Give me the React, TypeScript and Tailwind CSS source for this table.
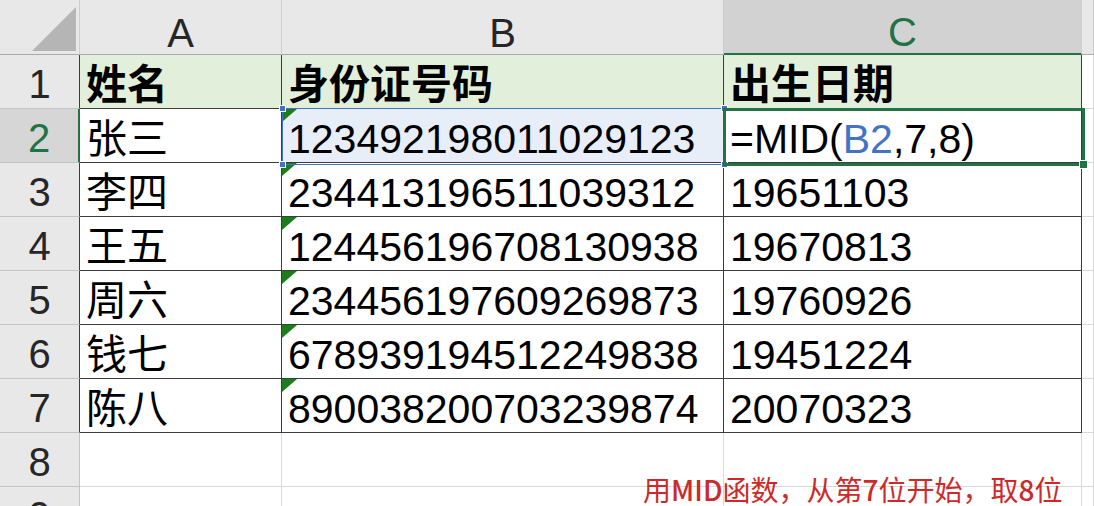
import React from "react";

type Person = { name: string; id: string; birth: React.ReactNode };

const people: Person[] = [
  {
    name: "张三",
    id: "123492198011029123",
    birth: (
      <>
        =MID(<span className="text-[#4472c4]">B2</span>,7,8)
      </>
    ),
  },
  { name: "李四", id: "234413196511039312", birth: "19651103" },
  { name: "王五", id: "124456196708130938", birth: "19670813" },
  { name: "周六", id: "234456197609269873", birth: "19760926" },
  { name: "钱七", id: "678939194512249838", birth: "19451224" },
  { name: "陈八", id: "890038200703239874", birth: "20070323" },
];

const colHead =
  "flex items-end justify-center pb-[1px] bg-[#e8e8e8] border-r border-b border-r-[#cdcdcd] border-b-[#ababab] text-[40px] leading-[40px] text-[#262626]";
const colHeadActive =
  "flex items-end justify-center pb-[1px] bg-[#d2d2d2] border-r border-b-2 border-r-[#cdcdcd] border-b-[#217346] text-[40px] leading-[40px] text-[#217346]";
const rowHead =
  "flex items-end justify-center pb-[4px] bg-[#e8e8e8] border-r border-b border-r-[#3c3c3c] border-b-[#c4c4c4] text-[40px] leading-[40px] text-[#262626]";
const rowHeadActive =
  "flex items-end justify-center pb-[4px] bg-[#d6d6d6] border-r-2 border-b border-r-[#217346] border-b-[#c4c4c4] text-[40px] leading-[40px] text-[#217346]";
const rowHeadPlain =
  "flex items-end justify-center pb-[4px] bg-[#e8e8e8] border-r border-b border-r-[#c4c4c4] border-b-[#c4c4c4] text-[40px] leading-[40px] text-[#262626]";
const cell =
  "relative flex items-end pb-[2px] pl-[6px] border-r border-b border-[#3c3c3c] text-[41px] leading-[41px] text-black whitespace-nowrap";
const blank = "border-r border-b border-[#d9d9d9] bg-white";

// 文本格式数字的绿色小三角
const TextFlag = () => (
  <svg className="absolute left-0 top-0" width="15" height="13" viewBox="0 0 15 13">
    <polygon points="0,0 15,0 0,13" fill="#1d7d1d" />
  </svg>
);

const Handle = ({ className }: { className: string }) => (
  <span className={`absolute h-[7px] w-[7px] border border-white bg-[#4472c4] ${className}`} />
);

export default function App() {
  return (
    <div className="relative h-[506px] w-[1094px] overflow-hidden bg-white font-['Liberation_Sans','Noto_Sans_CJK_SC',sans-serif]">
      <div className="grid grid-cols-[80px_202px_442px_358px_1fr] grid-rows-[55px_repeat(9,54px)]">
        <div className="flex items-end justify-end bg-[#e8e8e8] border-r border-b border-r-[#cdcdcd] border-b-[#ababab] pb-[3px] pr-[3px]">
          <svg width="44" height="44" viewBox="0 0 44 44">
            <polygon points="44,0 44,44 0,44" fill="#b5b5b5" />
          </svg>
        </div>
        <div className={colHead}>A</div>
        <div className={colHead}>B</div>
        <div className={colHeadActive}>C</div>
        <div className={colHead} />

        <div className={rowHead}>1</div>
        <div className={`${cell} bg-[#e2efda] font-bold`}>姓名</div>
        <div className={`${cell} bg-[#e2efda] font-bold`}>身份证号码</div>
        <div className={`${cell} bg-[#e2efda] font-bold`}>出生日期</div>
        <div className={blank} />

        {people.map((p, i) => (
          <React.Fragment key={p.id}>
            <div className={i === 0 ? rowHeadActive : rowHead}>{i + 2}</div>
            <div className={cell}>{p.name}</div>
            <div className={i === 0 ? `${cell} bg-[#e8eef8]` : cell}>
              <TextFlag />
              {p.id}
            </div>
            <div className={cell}>{p.birth}</div>
            <div className={blank} />
          </React.Fragment>
        ))}

        {[8, 9].map((n) => (
          <React.Fragment key={n}>
            <div className={rowHeadPlain}>{n}</div>
            <div className={blank} />
            <div className={blank} />
            <div className={blank} />
            <div className={blank} />
          </React.Fragment>
        ))}
      </div>

      {/* B2 引用框 */}
      <div className="absolute left-[282px] top-[108px] h-[57px] w-[443px] border border-[#4472c4]">
        <Handle className="-left-[4px] -top-[4px]" />
        <Handle className="-right-[4px] -top-[4px]" />
        <Handle className="-bottom-[4px] -left-[4px]" />
        <Handle className="-bottom-[4px] -right-[4px]" />
      </div>

      {/* 活动单元格 C2 */}
      <div className="absolute left-[723px] top-[108px] h-[58px] w-[362px] border-[3px] border-[#217346]">
        <span className="absolute -bottom-[6px] -right-[6px] h-[9px] w-[9px] border border-white bg-[#217346]" />
      </div>

      <div className="absolute left-[643px] top-[473px] whitespace-nowrap text-[28px] leading-[32px] text-[#cc2a2a] font-['Noto_Sans_CJK_SC',sans-serif]">
        用<span className="font-medium">MID</span>函数，从第<span className="font-medium">7</span>位开始，取<span className="font-medium">8</span>位
      </div>
    </div>
  );
}
